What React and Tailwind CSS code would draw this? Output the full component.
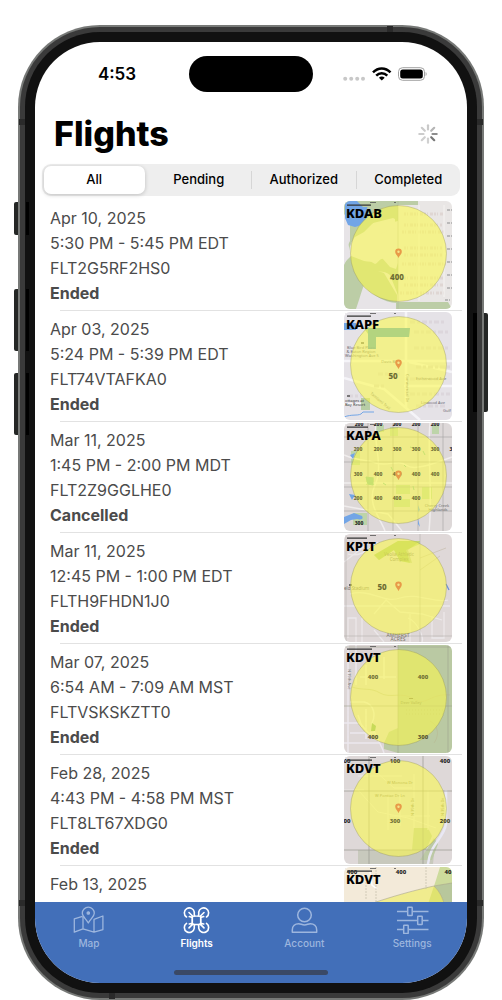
import React, { useState } from "react";

const filters = ["All", "Pending", "Authorized", "Completed"];

const flights = [
  {
    date: "Apr 10, 2025",
    time: "5:30 PM - 5:45 PM EDT",
    code: "FLT2G5RF2HS0",
    status: "Ended",
    airport: "KDAB",
    Map: KdabMap,
  },
  {
    date: "Apr 03, 2025",
    time: "5:24 PM - 5:39 PM EDT",
    code: "FLT74VTAFKA0",
    status: "Ended",
    airport: "KAPF",
    Map: KapfMap,
  },
  {
    date: "Mar 11, 2025",
    time: "1:45 PM - 2:00 PM MDT",
    code: "FLT2Z9GGLHE0",
    status: "Cancelled",
    airport: "KAPA",
    Map: KapaMap,
  },
  {
    date: "Mar 11, 2025",
    time: "12:45 PM - 1:00 PM EDT",
    code: "FLTH9FHDN1J0",
    status: "Ended",
    airport: "KPIT",
    Map: KpitMap,
  },
  {
    date: "Mar 07, 2025",
    time: "6:54 AM - 7:09 AM MST",
    code: "FLTVSKSKZTT0",
    status: "Ended",
    airport: "KDVT",
    Map: KdvtParkMap,
  },
  {
    date: "Feb 28, 2025",
    time: "4:43 PM - 4:58 PM MST",
    code: "FLT8LT67XDG0",
    status: "Ended",
    airport: "KDVT",
    Map: KdvtCityMap,
  },
  {
    date: "Feb 13, 2025",
    time: "",
    code: "",
    status: "",
    airport: "KDVT",
    Map: KdvtDesertMap,
  },
];

function Zone() {
  return (
    <circle cx="54.5" cy="52.5" r="48" fill="#fcfa4b" fillOpacity="0.58" stroke="#8f8f5c" strokeOpacity="0.6" strokeWidth="0.6" />
  );
}

function Pin() {
  return (
    <g>
      <path d="M54.5 57C53.4 54.3 51.2 53 51.2 50.7a3.3 3.3 0 0 1 6.6 0c0 2.3-2.2 3.6-3.3 6.3z" fill="#e89a48" />
      <circle cx="54.5" cy="50.8" r="1.2" fill="#f5e58a" />
    </g>
  );
}

function Label({ x, y, size = 7, fill = "#6d6c33", children }) {
  return (
    <text x={x} y={y} fontSize={size} fill={fill} textAnchor="middle" fontWeight="800">
      {children}
    </text>
  );
}

function Scale({ width = 24 }) {
  return (
    <g>
      <path d="M0 1.5H55" stroke="#555" strokeWidth="0.8" strokeDasharray="2 24 6 18" />
      <path d={`M3 4.2h${width}`} stroke="#333" strokeWidth="1.3" />
    </g>
  );
}

function KdabMap() {
  return (
    <g>
      <path d="M0 0h54v108H0z" fill="#e7e4e7" />
      <path d="M54 0h54v108H54z" fill="#e9e6e5" />
      <path d="M0 0h54v94L46 74c-7-5-15-4-20 0-7 8-9 20-14 34H0V62L7 55 20 60c8 2 14 0 18-3l8 9 6 2 2-6V20L36 24 20 34l-7 4-7 14H0l6-12V8L0 14z" fill="#bccda6" />
      <path d="M0 14l6 2-2 24 2 12-6 12z" fill="#e7e4e7" />
      <path d="M29 22l20-5 2 1v9c-7 2-12 4-15 7l15 9c3 8 3 16-1 24l-7-9c-8-2-8 4-12 5l-7-4 4-8C20 52 12 58 5 51c1-14 12-23 24-29z" fill="#e7e4e7" />
      <path d="M4 0h9l6 6 5 0-1 16-5 2-7 2-7-2-3-7V3z" fill="#72a5e6" />
      <path d="M24 0h30v14l-20 3-14 14-9 5 3-10 8-8z" fill="#bccda6" />
      <path d="M12 72c6-4 18-4 28 0l13 22v8C40 102 24 92 12 76z" fill="#bccda6" />
      <path d="M52 101h52l4 7H52zM54 0h20v4H54z" fill="#bccda6" />
      <path d="M60 24h38M58 31h42M60 47h38M60 54h38M58 63h44M60 77h40M60 84h40M56 92h44M60 13h40" stroke="#dfd6d3" strokeWidth="3" strokeDasharray="2 1 1 2 3 1" />
      <path d="M75 4v96M100 4v92" stroke="#f5f3f1" strokeWidth="1" />
      <path d="M103 9h5M103 22h5M103 35h5M103 48h5M103 61h5M103 74h5M103 87h5M101 99h7" stroke="#aaa" strokeWidth="1.4" strokeDasharray="3 1 1" />
      <path d="M54 0v108" stroke="#a9b09e" strokeWidth="0.5" />
      <Zone />
      <Label x={53} y={79} size={8}>400</Label>
      <Scale />
    </g>
  );
}

function KapfMap() {
  return (
    <g>
      <path d="M0 0h108v108H0z" fill="#e5e2e7" />
      <path d="M0 49h108M62 0v95M0 66l40 11 36 31M65 50l43 10M60 74h48M0 92h22" stroke="#f5f4f8" strokeWidth="2.5" fill="none" />
      <path d="M66 10h34M70 20h34M70 36h34M72 55h34M66 82h40M72 94h30M66 67h30M34 62h22M30 74h10M4 84h14" stroke="#dcd6dc" strokeWidth="3" strokeDasharray="5 2 3 2" />
      <path d="M20 16h46l-1 9H32v12h-8V22z" fill="#9fc99d" />
      <path d="M0 11h12v7H0z" fill="#72a5e6" />
      <path d="M17 86h9v12h-9z" fill="#b7cda5" />
      <path d="M0 105c8-3 13-1 17-3l2-2h11" stroke="#72a5e6" strokeWidth="1" fill="none" />
      <g fontSize="4" fill="#6f6a74" textAnchor="middle">
        <text x="17" y="37">Blue Bird Plaza</text>
        <text x="17" y="41">& Eaton Region</text>
        <text x="18" y="45">Washington Ave 5</text>
        <text x="47" y="51">Davis Blvd</text>
        <text x="87" y="68">Estherwood Ave</text>
        <text x="89" y="92">Linwood Ave</text>
        <text x="1" y="90" fill="#333" textAnchor="start">ottages at</text>
        <text x="1" y="94" fill="#333" textAnchor="start">Bay Resort</text>
        <text transform="translate(26 82) rotate(40)" textAnchor="start">Tamiami Trail</text>
        <text transform="translate(62 62) rotate(90)" textAnchor="start">Commercial Dr</text>
        <text x="103" y="100">Gulf</text>
      </g>
      <path d="M17 31h3M3 84h3" stroke="#555" strokeWidth="1.5" />
      <Zone />
      <path d="M24 16h42l-1 9H32v12h-8z" fill="#9cc88a" fillOpacity="0.6" />
      <Label x={49} y={67} size={8}>50</Label>
      <Scale />
    </g>
  );
}

const kapaNumbers = [
  [14, 28, "200"], [34, 28, "200"], [53, 28, "300"], [72, 28, "300"], [91, 28, "300"],
  [14, 53, "300"], [34, 53, "400"], [53, 53, "400"], [72, 53, "400"], [91, 53, "400"],
  [14, 77, "200"], [34, 77, "400"], [53, 77, "400"], [72, 77, "400"],
];

function KapaMap() {
  return (
    <g>
      <path d="M0 0h108v108H0z" fill="#ddd8d8" />
      <path d="M7 28h9v14H7zM31 2h9v7h-9zM46 4h8v9h-8zM88 2h7v9h-7zM22 54h8v8h-8zM52 62h14v9H52zM78 64h10v12H78zM9 90h14v12H9zM50 76h16v8H50z" fill="#bdd4a9" />
      <path d="M0 32c12 6 20 4 32 8s22-4 30 2 24 0 46-8M32 0c-3 20 8 44-1 62s6 34 10 46M86 0c-3 30 3 70-1 108M0 83l44 8 14 17M0 60h108" stroke="#f0eded" strokeWidth="1.5" fill="none" />
      <path d="M24 0v108M49 0v108M74 0v108M99 0v108M0 14h108M0 39h108M0 64h108M0 88h108" stroke="#a3a3a3" strokeWidth="0.6" />
      <path d="M0 94l10-4 8 3c2 3-1 4-5 3L7 97l-7 4zM6 32l5-2-2 6zM5 71l6 1-3 5zM74 82l2 5-2 2zM74 96v5l2 3z" fill="#72a5e6" />
      <path d="M22 54l7 1 0 7-5-1zM47 44l2 4M66 24l3 1M79 28l2 4M39 60l3 2M60 42l2 2M69 63l1 4" fill="#7fbfa0" stroke="#7fbfa0" strokeWidth="1" />
      <g fontSize="4" fill="#6a6a6a" textAnchor="middle">
        <text x="93" y="84">Cherry Creek</text>
        <text x="94" y="88">Highlands</text>
      </g>
      <Zone />
      {kapaNumbers.map(([x, y, value]) => (
        <Label key={`${x}-${y}`} x={x} y={y} size={5}>{value}</Label>
      ))}
      <Label x={15} y={102} size={5} fill="#222">300</Label>
      <Label x={107} y={28} size={5} fill="#222">3</Label>
      {[15, 34, 53, 72, 91].map((x) => (
        <Label key={x} x={x} y={3} size={5} fill="#222">200</Label>
      ))}
      <Scale width={21} />
    </g>
  );
}

function KpitMap() {
  return (
    <g>
      <path d="M0 0h108v108H0z" fill="#dfd8d8" />
      <path d="M30 21l24-14h22l0 3-14 6 4 13-10-2-6-11-15 10z" fill="#bdd48a" />
      <path d="M0 28l26-20M6 60c20-6 34 10 50 4s36 6 48 2M4 20c12 4 22-6 30-12M18 84v24M12 108V84H4v20M64 84c10 4 16 20 14 24M66 108V80M40 108l-10-12M0 72h106M88 82v22h12V78M30 80l12-14 14 12 22 2 20 6" stroke="#ece8ea" strokeWidth="1.3" fill="none" />
      <path d="M2 0v108M76 0v108M0 102h108" stroke="#b5b1ae" strokeWidth="0.6" />
      <path d="M102 50l3 6" stroke="#6a8fd8" strokeWidth="1.2" />
      <g fontSize="4.5" fill="#77736a" textAnchor="middle">
        <text x="55" y="22">Veolia Athletic</text>
        <text x="55" y="27">Complex</text>
        <text x="0" y="56" textAnchor="start">eld Stadium</text>
        <text x="54" y="103" fontSize="5">AMHERST</text>
        <text x="54" y="107" fontSize="5">ACRES</text>
      </g>
      <path d="M5 51h3" stroke="#444" strokeWidth="1.4" />
      <path d="M76 24l26-10M76 36l20-14" stroke="#bcb29c" strokeWidth="0.5" />
      <Zone />
      <path d="M30 21l24-14h22l-12 9 4 13-12-2-6-11-15 10z" fill="#cdd94a" fillOpacity="0.4" />
      <Label x={38} y={56} size={8}>50</Label>
      <Scale width={20} />
    </g>
  );
}

function KdvtParkMap() {
  return (
    <g>
      <path d="M0 0h55v108H0z" fill="#ddd6d6" />
      <path d="M4 0v108M6 57h14c10 2 12 13 8 21 0 8 8 18 12 30M0 78h16l10 12M6 88h24M22 64v30M0 98h36M12 0v40M22 20v20M40 12v22M16 32h36M14 70l4 12" stroke="#ece8ee" strokeWidth="1.5" fill="none" />
      <path d="M54 0h54v108H54l-14-4v-6l5-10 9-2z" fill="#bac9a3" />
      <path d="M54 104l-10-1-4-4 5-12 9-4z" fill="#bac9a3" />
      <path d="M8 42c12 4 18 0 28 6s22-2 34 6 16-6 36-4M86 76c8 4 10 14 4 22" stroke="#b9b992" strokeWidth="0.6" fill="none" />
      <path d="M54 0v108M0 61h108M104 0v108M0 2h108" stroke="#9da28e" strokeWidth="0.6" />
      <path d="M62 65h38M62 69h38" stroke="#a5af80" strokeWidth="0.5" strokeDasharray="1 2" />
      <path d="M28 78l4 3-1 5h-4z" fill="#7fae6d" />
      <text x="67" y="59" fontSize="4" fill="#77795a" textAnchor="middle">Deer Valley</text>
      <path d="M65 53.5h4" stroke="#77795a" strokeWidth="1.2" />
      <text transform="translate(4 24) rotate(90)" fontSize="4" fill="#777">N 19th Ave</text>
      <Zone />
      <Label x={29} y={34} size={6}>400</Label>
      <Label x={79} y={34} size={6}>400</Label>
      <Label x={29} y={94} size={6} fill="#55532e">400</Label>
      <Label x={79} y={94} size={6} fill="#55532e">300</Label>
      <Scale width={25} />
    </g>
  );
}

function KdvtCityMap() {
  return (
    <g>
      <path d="M0 0h108v108H0z" fill="#ded8d8" />
      <path d="M14 94h60l14 2 4-16-3 28H14z" fill="#c8c9bd" />
      <path d="M70 72h14l4 8-6 14H68zM90 82l4 6-6 16-12 0z" fill="#bcc9a5" />
      <path d="M102 34v34c-2 14-16 20-18 40" stroke="#e9e8f4" strokeWidth="2.5" fill="none" />
      <path d="M14 34l20 22 30 6 28 10M44 40v34M56 38v32M70 18v54M30 14l20 18h18M46 60h40M84 34v40M14 20h44M0 34h20" stroke="#eae6e6" strokeWidth="1" fill="none" />
      <path d="M25 0v108M79 0v108M0 35h108M0 94h108" stroke="#98988f" strokeWidth="0.7" />
      <g fontSize="4" fill="#85815b" textAnchor="middle">
        <text x="56" y="28">W Monona Dr</text>
        <text x="46" y="41">W Pontiac Dr Ln</text>
        <text transform="translate(70 60) rotate(-90)" textAnchor="start">N 39th Dr</text>
        <text transform="translate(100 60) rotate(-90)" textAnchor="start">N 35th Dr</text>
      </g>
      <Zone />
      <Label x={51} y={7} size={6} fill="#55532e">100</Label>
      <Label x={101} y={7} size={6} fill="#222">400</Label>
      <Label x={3} y={7} size={6} fill="#222">00</Label>
      <Label x={51} y={67} size={6}>300</Label>
      <Label x={101} y={67} size={6} fill="#454421">200</Label>
      <Label x={3} y={67} size={6} fill="#222">00</Label>
      <Scale width={25} />
    </g>
  );
}

function KdvtDesertMap() {
  return (
    <g>
      <path d="M0 0h108v108H0z" fill="#f3ead9" />
      <path d="M96 0h12v17l-18 2 2-6z" fill="#cddb9c" />
      <path d="M90 19l18-3v30H98z" fill="#b8c79c" />
      <path d="M29 36c18-6 38-12 61-17 6 6 9 12 12 24v20H29z" fill="#f0ec8e" />
      <path d="M90 19c6 6 9 12 12 24H82z" fill="#dfe36f" />
      <path d="M29 36c18-6 38-12 61-17l18-3M90 19c6 6 9 12 12 24" stroke="#aaa68c" strokeWidth="0.6" fill="none" />
      <path d="M26 4l2 14 5 4" stroke="#fff" strokeWidth="1.5" fill="none" />
      <path d="M32 0v50M82 0v22M22 12v20" stroke="#bdb7a2" strokeWidth="0.6" strokeDasharray="2 1" />
      <Label x={8} y={7} size={6} fill="#222">400</Label>
      <Label x={57} y={7} size={6} fill="#222">400</Label>
      <Label x={104} y={7} size={6} fill="#222">40</Label>
      <Scale width={25} />
    </g>
  );
}

function MapThumb({ flight, hasPin }) {
  return (
    <svg
      className="size-[108px] shrink-0 rounded-md font-['Noto_Sans',sans-serif]"
      viewBox="0 0 108 108"
      role="img"
      aria-label={flight.airport}
    >
      <flight.Map />
      {hasPin && <Pin />}
      <text x="2" y="17" fontSize="13" fontWeight="800" fill="#000">
        {flight.airport}
      </text>
    </svg>
  );
}

function FlightRow({ flight }) {
  const hasPin = flight.Map !== KdvtParkMap && flight.Map !== KdvtDesertMap;
  return (
    <li className="shrink-0">
      <div className="flex h-[110px] items-center justify-between px-[15px]">
        <div className="h-[102px] pt-[2px] text-base leading-[25px] text-[#4b4b4b]">
          <p>{flight.date}</p>
          <p>{flight.time}</p>
          <p>{flight.code}</p>
          <p className="font-bold">{flight.status}</p>
        </div>
        <MapThumb flight={flight} hasPin={hasPin} />
      </div>
      <div className="mr-[5px] ml-[25px] h-px bg-[#e2e2e2]" />
    </li>
  );
}

function StatusBar() {
  return (
    <div className="flex shrink-0 pt-[14px]">
      <div className="flex flex-1 items-center justify-center pt-[2px] pl-[10px] text-[17px] font-semibold text-black">
        4:53
      </div>
      <div className="h-9 w-[124px] rounded-full bg-black" />
      <div className="flex flex-1 items-center justify-center pr-[10px]">
        <svg width="84" height="14" viewBox="0 0 84 14" fill="none">
          <g fill="#c8c8c8">
            <circle cx="2.2" cy="11.7" r="2" />
            <circle cx="8.2" cy="11.7" r="2" />
            <circle cx="14.2" cy="11.7" r="2" />
            <circle cx="20" cy="11.7" r="2" />
          </g>
          <g stroke="#000" strokeWidth="2.5">
            <path d="M30 5.4c5-5.2 12.5-5.2 17.5 0" />
            <path d="M33.2 8.7c3.2-3.2 7.9-3.2 11.1 0" />
          </g>
          <path d="M38.8 13.6l-2.9-2.9c1.6-1.5 4.2-1.5 5.8 0z" fill="#000" />
          <rect x="55.5" y="0.7" width="26" height="12.6" rx="4" stroke="#a2a2a2" />
          <rect x="57.2" y="2.4" width="22.6" height="9.2" rx="2.5" fill="#000" />
          <path d="M82.6 5c1.4 0.6 1.4 3.4 0 4z" fill="#a2a2a2" />
        </svg>
      </div>
    </div>
  );
}

function Spinner() {
  return (
    <svg width="20" height="20" viewBox="0 0 20 20" fill="none" strokeWidth="2.2" strokeLinecap="round" aria-label="Loading">
      <path d="M10 1.3v4.2" stroke="#c9c9c9" />
      <path d="M16.2 3.8l-3 3" stroke="#b5b5b5" />
      <path d="M18.7 10h-4.2" stroke="#8d8d8d" />
      <path d="M16.2 16.2l-3-3" stroke="#777777" />
      <path d="M10 18.7v-4.2" stroke="#d0d0d0" />
      <path d="M3.8 16.2l3-3" stroke="#cfcfcf" />
      <path d="M1.3 10h4.2" stroke="#cccccc" />
      <path d="M3.8 3.8l3 3" stroke="#cbcbcb" />
    </svg>
  );
}

function MapIcon() {
  return (
    <svg width="31" height="28" viewBox="0 0 31 28" fill="none" stroke="currentColor" strokeWidth="1.3" strokeLinejoin="round">
      <path d="M15.3 17C12.5 12.4 9.3 10.4 9.3 7.2a6 6 0 0 1 12 0c0 3.2-3.2 5.2-6 9.8z" />
      <circle cx="15.3" cy="7" r="1.2" fill="currentColor" />
      <path d="M9.5 10.3L1.3 12.8V26.2L10 22.8l11 3.4 8.9-2.6V10l-8.9 3.4V26.2M10 10.6v12.2" />
    </svg>
  );
}

function DroneIcon() {
  return (
    <svg width="27" height="28" viewBox="0 0 27 28" fill="none" stroke="currentColor" strokeWidth="1.6" strokeLinecap="round" strokeLinejoin="round">
      <path d="M3.5 11A5 5 0 1 1 11.3 6.2c0 1.3-.4 2 .4 3.8" />
      <path d="M23.5 11A5 5 0 1 0 15.7 6.2c0 1.3.4 2-.4 3.8" />
      <path d="M3.5 17.4A5 5 0 1 0 11.3 22.2c0-1.3-.4-2 .4-3.6" />
      <path d="M23.5 17.4A5 5 0 1 1 15.7 22.2c0-1.3.4-2-.4-3.6" />
      <path d="M6 6.5l4 4M21 6.5l-4 4M6 21.9l4-4M21 21.9l-4-4M6.3 10.6l3 .8v5.8l-3 .8M20.7 10.6l-3 .8v5.8l3 .8" />
      <path d="M9.3 10.1h8.4v8.4H9.3z" strokeWidth="1.3" />
    </svg>
  );
}

function AccountIcon() {
  return (
    <svg width="27" height="28" viewBox="0 0 27 28" fill="none" stroke="currentColor" strokeWidth="1.5" strokeLinejoin="round">
      <circle cx="13.5" cy="9" r="6.8" />
      <path d="M1.3 26.3V24c0-3.9 2.8-6.3 6.4-6.3 2.2 0 3.2 1.2 5.8 1.2s3.6-1.2 5.8-1.2c3.6 0 6.4 2.4 6.4 6.3v2.3z" />
    </svg>
  );
}

function SettingsIcon() {
  return (
    <svg width="33" height="28" viewBox="0 0 33 28" fill="none" stroke="currentColor" strokeWidth="1.5">
      <path d="M1 5.4h10.5M16.5 5.4h16M1 14.4h20.5M26.5 14.4h6M1 23.4h6.5M12.5 23.4h20" />
      <rect x="11.7" y="1.2" width="4.5" height="8.4" rx="0.5" />
      <rect x="21.7" y="10.2" width="4.5" height="8.4" rx="0.5" />
      <rect x="7.7" y="19.2" width="4.5" height="8.4" rx="0.5" />
    </svg>
  );
}

const tabs = [
  { name: "Map", Icon: MapIcon },
  { name: "Flights", Icon: DroneIcon },
  { name: "Account", Icon: AccountIcon },
  { name: "Settings", Icon: SettingsIcon },
];

function TabBar() {
  return (
    <nav className="flex shrink-0 flex-col bg-[#426fb9] pt-1">
      <div className="flex pr-px">
        {tabs.map(({ name, Icon }) => (
          <a
            key={name}
            href={`#${name.toLowerCase()}`}
            className={`flex flex-1 flex-col items-center text-[10px] leading-[18px] ${
              name === "Flights" ? "font-semibold text-white" : "font-medium text-[#9db6de]"
            }`}
          >
            <Icon />
            {name}
          </a>
        ))}
      </div>
      <div className="mx-auto mt-[18px] mb-2 h-[5px] w-[154px] rounded-full bg-[#3a4966]" />
    </nav>
  );
}

// hardware buttons and antenna bands sit on the phone's frame
function FrameParts() {
  return (
    <div aria-hidden="true">
      <div className="absolute top-[177px] -left-1 h-[33px] w-1 rounded-l-xs bg-[#242625]" />
      <div className="absolute top-[264px] -left-1 h-[62px] w-1 rounded-l-xs bg-[#242625]" />
      <div className="absolute top-[348px] -left-1 h-[62px] w-1 rounded-l-xs bg-[#242625]" />
      <div className="absolute top-[288px] -right-1 h-[99px] w-1 rounded-r-xs bg-[#242625]" />
      <div className="absolute top-[177px] left-2 h-[33px] w-[3px] bg-black" />
      <div className="absolute top-[264px] left-2 h-[62px] w-[3px] bg-black" />
      <div className="absolute top-[348px] left-2 h-[62px] w-[3px] bg-black" />
      <div className="absolute top-[288px] right-[7px] h-[99px] w-1 bg-black" />
      <div className="absolute top-[94px] left-px h-[6px] w-[6px] bg-[#2a2a2a]" />
      <div className="absolute top-[94px] right-px h-[6px] w-[6px] bg-[#2a2a2a]" />
      <div className="absolute bottom-[94px] left-px h-[6px] w-[6px] bg-[#2a2a2a]" />
      <div className="absolute right-px bottom-[94px] h-[6px] w-[6px] bg-[#2a2a2a]" />
      <div className="absolute top-px right-[91px] h-[6px] w-[6px] bg-[#2a2a2a]" />
      <div className="absolute bottom-px left-[91px] h-[6px] w-[6px] bg-[#2a2a2a]" />
    </div>
  );
}

export default function App() {
  const [filter, setFilter] = useState("All");

  return (
    <div className="flex h-screen bg-white px-[18px] pt-[25px] font-[Inter,sans-serif]">
      <div className="relative flex min-w-0 flex-1 rounded-[82px] bg-[#777977] p-[2px]">
        <div className="flex min-w-0 flex-1 rounded-[80px] bg-[#3a3a3a] p-[5px]">
          <div className="flex min-w-0 flex-1 rounded-[75px] bg-[#111111] p-[10px]">
            <main className="flex min-w-0 flex-1 flex-col overflow-hidden rounded-[65px] bg-white">
              <StatusBar />
              <header className="flex shrink-0 items-center justify-between pt-5 pr-[29px] pl-[19px]">
                <h1 className="text-[34px] leading-[44px] font-extrabold text-black">Flights</h1>
                <Spinner />
              </header>
              <div className="mx-[7px] mt-2 grid shrink-0 grid-cols-4 rounded-[9px] bg-[#eeeeee]">
                {filters.map((item, i) => (
                  <div key={item} className="flex items-center py-[2px]">
                    {i > 1 && <span className="h-[18px] w-px bg-[#d6d6d6]" />}
                    <button
                      type="button"
                      aria-pressed={filter === item}
                      onClick={() => setFilter(item)}
                      className={`h-7 min-w-0 flex-1 text-[13px] font-medium text-black ${
                        filter === item ? "mx-[2px] rounded-[7px] bg-white shadow-[0_1px_4px_rgba(0,0,0,0.2)]" : ""
                      }`}
                    >
                      {item}
                    </button>
                  </div>
                ))}
              </div>
              <ul className="mt-1 flex min-h-0 flex-1 flex-col overflow-hidden">
                {flights.map((flight) => (
                  <FlightRow key={flight.date + flight.airport} flight={flight} />
                ))}
              </ul>
              <TabBar />
            </main>
          </div>
        </div>
        <FrameParts />
      </div>
    </div>
  );
}
